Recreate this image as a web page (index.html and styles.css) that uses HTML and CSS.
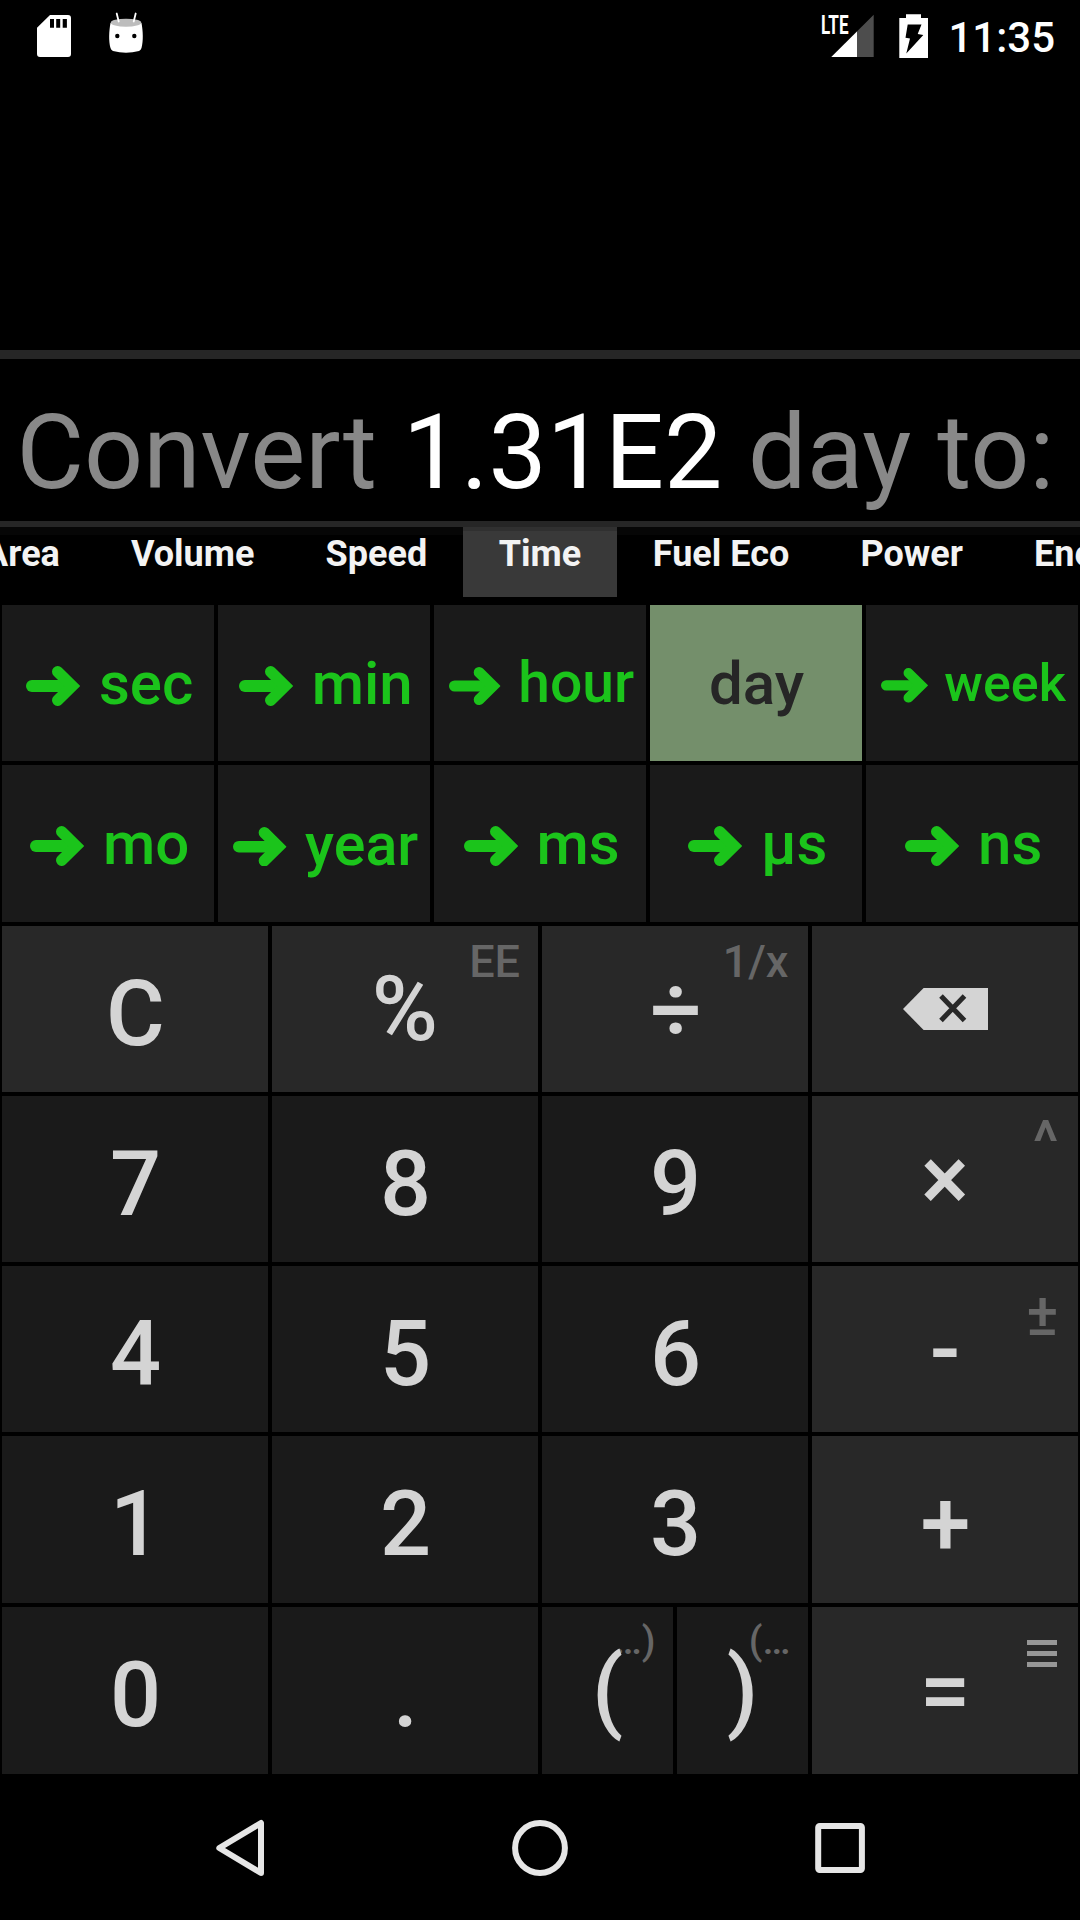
FILE: index.html
```html
<!DOCTYPE html>
<html lang="en">
<head>
<meta charset="utf-8">
<title>Unit converter</title>
<link rel="stylesheet" href="styles.css">
</head>
<body>
<svg class="defs" width="0" height="0">
  <symbol id="arrow" viewBox="0 0 54.4 40">
    <path d="M5.9 20H44" fill="none" stroke="currentColor" stroke-width="11.8" stroke-linecap="round"/>
    <path d="M31.7 5.7L46.2 20L31.7 34.3" fill="none" stroke="currentColor" stroke-width="11.4" stroke-linecap="round"/>
  </symbol>
</svg>
<div class="screen">
  <header class="status">
    <svg class="status-left" width="160" height="72" viewBox="0 0 160 72">
      <path fill="#fff" fill-rule="evenodd" d="M50 15H68a3 3 0 0 1 3 3V54a3 3 0 0 1-3 3H40a3 3 0 0 1-3-3V27.7zM50 19v8.7h4V19zM56.2 19v8.7h4V19zM62.7 19v8.7h4.2V19z"/>
      <path fill="#fff" d="M110.5 23C109 31 108.500 41 110.500 48Q111 50 113 51Q126 54.500 139 51Q141 50 141.500 48C143.500 41 143 31 141.500 23z"/>
      <ellipse cx="126" cy="22.700" rx="15.300" ry="4" fill="#bdbdbd"/>
      <path d="M116.700 13.500L118.700 21.500M135.700 13.500L133.700 21.500" stroke="#fff" stroke-width="1.800" stroke-linecap="round"/>
      <circle cx="117.300" cy="36" r="2.200"/><circle cx="134.300" cy="36" r="2.200"/>
    </svg>
    <div class="status-right">
      <svg width="112" height="72" viewBox="820 0 112 72">
        <text class="lte" x="821" y="33.500" textLength="27.500" lengthAdjust="spacingAndGlyphs">LTE</text>
        <path fill="#4d4d4d" d="M873.700 14.700V57H831.300z"/>
        <path fill="#fff" d="M857 31.400V57H831.300z"/>
        <path fill="#fff" fill-rule="evenodd" d="M906 14.300h15V18h7V58H899.300V18H906zM907.700 24.500L905.500 37.700L910 38.500L906.300 53.500L923.300 35L917.700 34L921.500 24.500z"/>
      </svg>
      <span class="clock">11:35</span>
    </div>
  </header>

  <section class="history"></section>
  <section class="display"><span class="prompt">Convert <b>1.31E2</b> day to:</span></section>

  <nav class="tabs">
    <span class="tab">Area</span><span class="tab">Volume</span><span class="tab">Speed</span><span class="tab active">Time</span><span class="tab">Fuel Eco</span><span class="tab">Power</span><span class="tab">Energy</span>
  </nav>

  <section class="units">
    <div class="unit"><svg class="arrow"><use href="#arrow"/></svg><span class="name drop">sec</span></div>
    <div class="unit"><svg class="arrow"><use href="#arrow"/></svg><span class="name drop">min</span></div>
    <div class="unit fit-57"><svg class="arrow"><use href="#arrow"/></svg><span class="name">hour</span></div>
    <div class="unit current"><span class="name drop">day</span></div>
    <div class="unit fit-52"><svg class="arrow"><use href="#arrow"/></svg><span class="name drop">week</span></div>
    <div class="unit"><svg class="arrow"><use href="#arrow"/></svg><span class="name">mo</span></div>
    <div class="unit fit-59"><svg class="arrow"><use href="#arrow"/></svg><span class="name drop">year</span></div>
    <div class="unit"><svg class="arrow"><use href="#arrow"/></svg><span class="name">ms</span></div>
    <div class="unit"><svg class="arrow"><use href="#arrow"/></svg><span class="name">µs</span></div>
    <div class="unit"><svg class="arrow"><use href="#arrow"/></svg><span class="name">ns</span></div>
  </section>

  <section class="keypad">
    <div class="key op low">C</div>
    <div class="key op"><span class="hint">EE</span>%</div>
    <div class="key op divide"><span class="hint">1/x</span>÷</div>
    <div class="key op">
      <svg class="backspace" width="85" height="42" viewBox="0 0 85 42"><path fill="#d4d4d4" d="M0 21L20.600 0H85V42H20.600z"/><path d="M38 8L61.500 32.500M61.500 8L38 32.500" stroke="#282828" stroke-width="5"/></svg>
    </div>
    <div class="key low">7</div><div class="key low">8</div><div class="key low">9</div>
    <div class="key op"><span class="hint caret">^</span>×</div>
    <div class="key low">4</div><div class="key low">5</div><div class="key low">6</div>
    <div class="key op"><span class="hint sign">±</span>-</div>
    <div class="key low">1</div><div class="key low">2</div><div class="key low">3</div>
    <div class="key op low">+</div>
    <div class="key low">0</div><div class="key low">.</div>
    <div class="pair">
      <div class="key"><span class="hint paren">…)</span><span class="face">(</span></div>
      <div class="key"><span class="hint paren">(…</span><span class="face">)</span></div>
    </div>
    <div class="key op">
      <svg class="hint-menu" width="30" height="27" viewBox="0 0 30 27"><path fill="#969696" d="M0 0h30v5H0zM0 11h30v5H0zM0 22h30v5H0z"/></svg>=</div>
  </section>

  <footer class="navbar">
    <svg width="60" height="60" viewBox="0 0 60 60"><path d="M51 5V55L9.300 30z" fill="none" stroke="#e6e6e6" stroke-width="6" stroke-linejoin="round"/></svg>
    <svg width="60" height="60" viewBox="0 0 60 60"><circle cx="30" cy="30" r="24.900" fill="none" stroke="#e6e6e6" stroke-width="6"/></svg>
    <svg width="60" height="60" viewBox="0 0 60 60"><rect x="8.200" y="8" width="43.700" height="44" rx="1.500" fill="none" stroke="#e6e6e6" stroke-width="6"/></svg>
  </footer>
</div>
</body>
</html>
```
FILE: styles.css
```css
* { box-sizing: border-box; }

body {
  margin: 0;
  background: #000;
  font-family: Roboto, sans-serif;
}

.defs { display: block; }

.screen {
  display: flex;
  flex-direction: column;
  width: 1080px;
  height: 1920px;
  overflow: hidden;
}

.status {
  display: flex;
  justify-content: space-between;
  height: 72px;
}

.status-right {
  display: flex;
  padding-right: 25px;
}

.lte {
  font-size: 25.5px;
  font-weight: 700;
  fill: #fff;
}

.clock {
  margin-left: 16px;
  color: #fff;
  font-size: 42px;
  font-weight: 500;
  line-height: 75px;
}

.history {
  height: 287px;
  border-bottom: 9px solid #262626;
}

.display {
  display: flex;
  justify-content: flex-end;
  height: 168px;
  padding: 32px 25.5px 0 0;
  border-bottom: 6px solid #262626;
  color: #888;
  font-size: 103.8px;
  line-height: 123px;
  white-space: nowrap;
}

.display b {
  color: #fff;
  font-weight: 400;
}

.tabs {
  display: flex;
  height: 70px;
  margin-left: -51.5px;
  background: linear-gradient(#060606 8px, #000 8px);
}

.tab {
  flex: none;
  padding: 0 35.6px;
  color: #f3f3f3;
  font-size: 36px;
  font-weight: 700;
  line-height: 55px;
}

.tab.active {
  padding: 0 36px;
  background: linear-gradient(#303030 4px, #393939 4px);
}

.units {
  display: grid;
  grid-template-columns: repeat(5, 212px);
  grid-template-rows: 156px 157px;
  gap: 4px;
  margin-top: 6px;
  padding: 2px;
}

.unit {
  display: flex;
  align-items: center;
  justify-content: center;
  background: #1a1a1a;
  color: #1bc41b;
  font-size: 60px;
  font-weight: 500;
  line-height: 1.2;
}

.unit.current {
  padding-left: 1px;
  background: #748f6b;
  color: #262626;
}

.fit-57 { font-size: 57px; }
.fit-52 { font-size: 52px; }
.fit-59 { font-size: 59.2px; }

.name.drop { margin-top: 2px; }

.arrow {
  width: 0.907em;
  height: 0.667em;
  margin: 0.1em 0.31em 0 0.055em;
}

.keypad {
  display: grid;
  grid-template-columns: repeat(4, 266px);
  grid-template-rows: 166px 166px 166px 167px 167px;
  gap: 4px;
  padding: 2px;
}

.pair {
  display: grid;
  grid-template-columns: 131px 131px;
  gap: 4px;
}

.key {
  position: relative;
  display: flex;
  align-items: center;
  justify-content: center;
  background: #1a1a1a;
  color: #d4d4d4;
  font-size: 90px;
  font-weight: 500;
  line-height: 106px;
}

.key.op {
  padding-top: 2px;
  background: #282828;
}

.key.low { padding: 11px 0 0 1px; }

.key.divide { padding: 4px 0 0 2px; }

.face { position: relative; }

.backspace { margin-top: -2px; }

.hint {
  position: absolute;
  top: 9px;
  right: 18px;
  color: #666;
  font-size: 45px;
  line-height: 53px;
}

.divide .hint { right: 19.5px; }

.hint.caret,
.hint.sign {
  right: 19.5px;
  font-size: 60px;
  line-height: 70px;
}

.hint.caret { top: 11px; }
.hint.sign { top: 13.5px; }

.hint.paren {
  top: 7px;
  right: 17.5px;
  font-size: 39.5px;
}

.hint-menu {
  position: absolute;
  top: 33px;
  right: 21px;
}

.navbar {
  display: flex;
  justify-content: center;
  align-items: center;
  gap: 240px;
  height: 144px;
}
```
